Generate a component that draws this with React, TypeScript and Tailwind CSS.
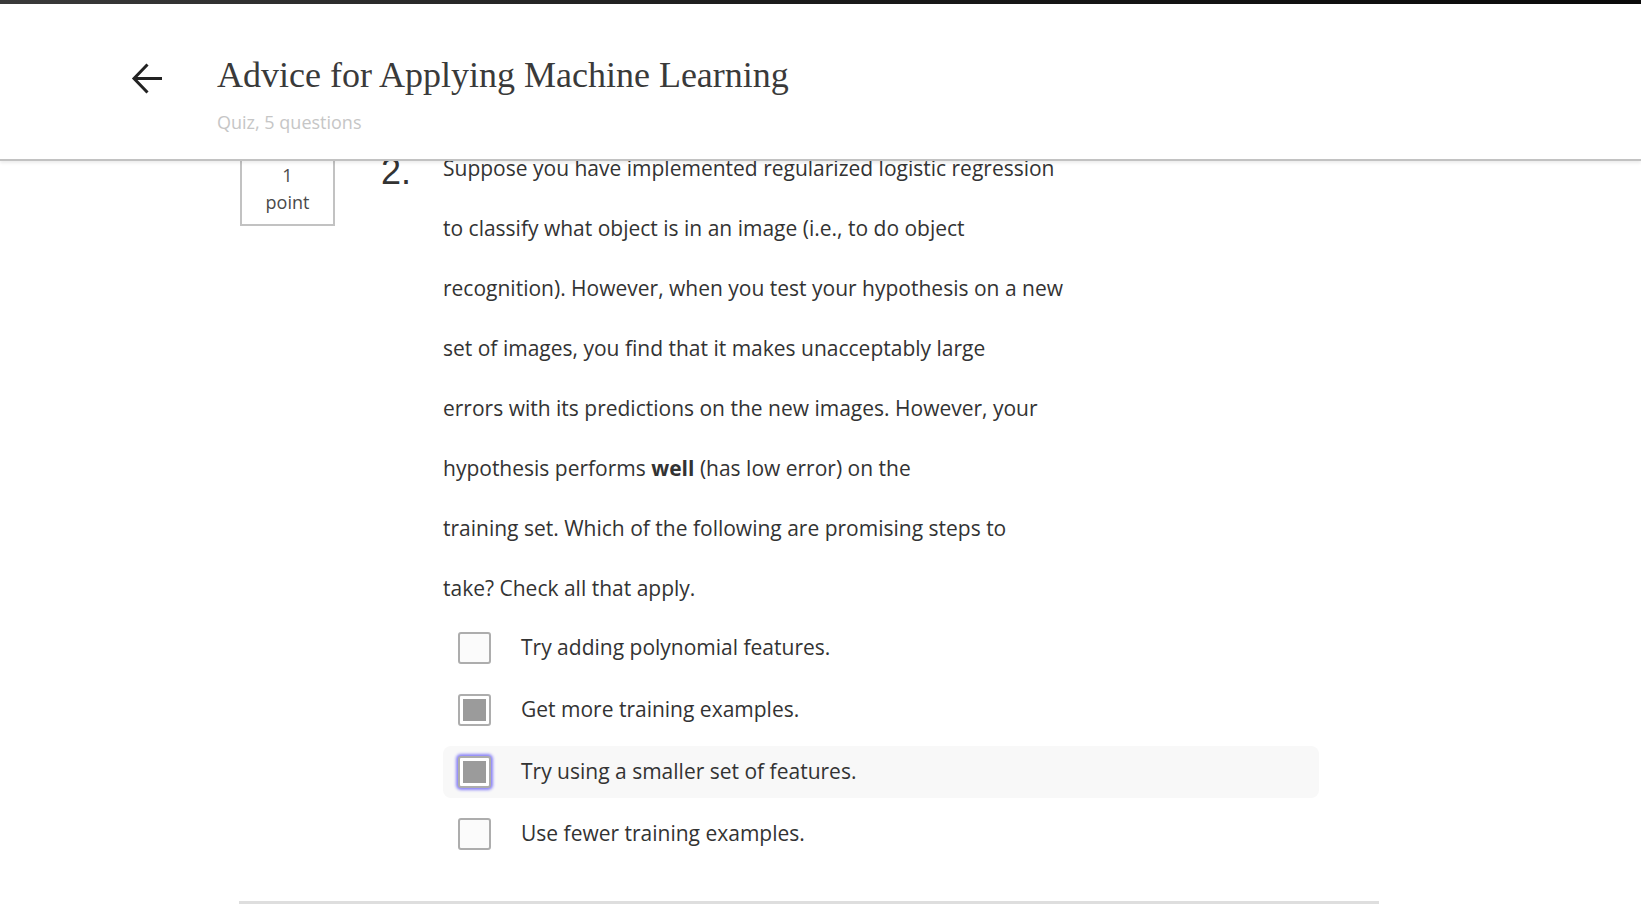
import React from "react";

const questionLines = [
  <>Suppose you have implemented regularized logistic regression</>,
  <>to classify what object is in an image (i.e., to do object</>,
  <>recognition). However, when you test your hypothesis on a new</>,
  <>set of images, you find that it makes unacceptably large</>,
  <>errors with its predictions on the new images. However, your</>,
  <>
    hypothesis performs <b className="font-bold">well</b> (has low error) on the
  </>,
  <>training set. Which of the following are promising steps to</>,
  <>take? Check all that apply.</>,
];

const options = [
  { label: "Try adding polynomial features.", checked: false, focused: false },
  { label: "Get more training examples.", checked: true, focused: false },
  { label: "Try using a smaller set of features.", checked: true, focused: true },
  { label: "Use fewer training examples.", checked: false, focused: false },
];

function Checkbox({ checked, focused }: { checked: boolean; focused: boolean }) {
  return (
    <div
      className={
        "w-[33px] h-[32px] shrink-0 rounded-[3px] border-2 border-[#adadad] p-[3px] " +
        (focused ? "shadow-[0_0_3px_2px_#8b84f7] bg-white" : checked ? "bg-white" : "bg-[#fbfbfb]")
      }
    >
      {checked && <div className="w-full h-full bg-[#9b9b9b]" />}
    </div>
  );
}

export default function App() {
  return (
    <div className="relative h-[923px] overflow-hidden bg-white font-['Open_Sans',sans-serif] text-[#333]">
      <header className="absolute top-0 left-0 right-0 z-10 h-[161px] bg-white border-b-2 border-[#c2c2c2] shadow-[0_2px_3px_rgba(0,0,0,0.08)]">
        <div className="h-[4px] bg-gradient-to-r from-[#3a3a3a] via-[#1a1a1a] to-[#0a0a0a]" />
        <div className="flex">
          <button className="ml-[131px] mt-[59px] w-[33px] h-[31px] shrink-0" aria-label="Back">
            <svg viewBox="0 0 33 31" width="33" height="31" fill="none" stroke="#222" strokeWidth="3">
              <path d="M16.5 1.5 L3 15.5 L16.5 29.5" />
              <path d="M3 15.5 H31" />
            </svg>
          </button>
          <div className="ml-[53px] mt-[53px]">
            <h1 className="font-['Liberation_Serif',serif] text-[36px] leading-none text-[#3a3a3a] font-normal">
              Advice for Applying Machine Learning
            </h1>
            <div className="mt-[17px] text-[18px] leading-[24px] text-[#c6c6c6]">Quiz, 5 questions</div>
          </div>
        </div>
      </header>

      <main className="pt-[138px]">
        <div className="ml-[239px] w-[1140px]">
          <div className="flex">
            <div className="w-[142px] shrink-0 pl-[1px]">
              <div className="w-[95px] h-[88px] border-2 border-[#c2c2c2] flex flex-col items-center justify-end pb-[8px] text-[18px] leading-[27px] text-[#4a4a4a]">
                <div>1</div>
                <div>point</div>
              </div>
            </div>
            <div className="w-[62px] shrink-0 mt-[16px] font-['Liberation_Sans',sans-serif] text-[36px] leading-none text-[#333]">
              2.
            </div>
            <div className="flex-1">
              <div className="text-[21px] leading-[60px] whitespace-nowrap">
                {questionLines.map((line, i) => (
                  <div key={i}>{line}</div>
                ))}
              </div>
              <div className="mt-[4px] flex flex-col gap-[10px]">
                {options.map((o) => (
                  <div
                    key={o.label}
                    className={
                      "w-[876px] h-[52px] flex items-center pl-[15px] rounded-lg " +
                      (o.focused ? "bg-[#f8f8f8]" : "")
                    }
                  >
                    <Checkbox checked={o.checked} focused={o.focused} />
                    <span className="ml-[30px] text-[21px]">{o.label}</span>
                  </div>
                ))}
              </div>
            </div>
          </div>
          <div className="mt-[41px] h-[3px] bg-[#dedede]" />
        </div>
      </main>
    </div>
  );
}
